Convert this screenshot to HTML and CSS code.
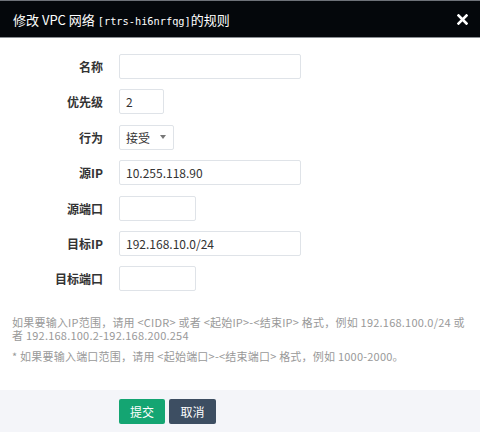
FILE: index.html
```html
<!DOCTYPE html>
<html lang="zh">
<head>
<meta charset="utf-8">
<link rel="stylesheet" href="styles.css">
</head>
<body>
<div class="dialog">
  <div class="header">
    <div class="title">修改 VPC 网络 <span class="mono">[rtrs-hi6nrfqg]</span>的规则</div>
    <div class="close">
      <svg width="11" height="11" viewBox="0 0 11 11"><path d="M1.5 1.5 L9.5 9.5 M9.5 1.5 L1.5 9.5" stroke="#fff" stroke-width="2.6" stroke-linecap="square"/></svg>
    </div>
  </div>
  <div class="body">
    <div class="form">
      <label class="lbl">名称</label><div class="field"><div class="input w-l"></div></div>
      <label class="lbl">优先级</label><div class="field"><div class="input w-s">2</div></div>
      <label class="lbl">行为</label><div class="field"><div class="input select">接受<span class="caret"></span></div></div>
      <label class="lbl">源IP</label><div class="field"><div class="input w-l">10.255.118.90</div></div>
      <label class="lbl">源端口</label><div class="field"><div class="input w-m"></div></div>
      <label class="lbl">目标IP</label><div class="field"><div class="input w-l">192.168.10.0/24</div></div>
      <label class="lbl">目标端口</label><div class="field"><div class="input w-m"></div></div>
    </div>
    <div class="help">
      <p>如果要输入IP范围，请用 &lt;CIDR&gt; 或者 &lt;起始IP&gt;-&lt;结束IP&gt; 格式，例如 192.168.100.0/24 或者 192.168.100.2-192.168.200.254</p>
      <p class="p2">* 如果要输入端口范围，请用 &lt;起始端口&gt;-&lt;结束端口&gt; 格式，例如 1000-2000。</p>
    </div>
  </div>
  <div class="footer">
    <button class="btn btn-ok">提交</button>
    <button class="btn btn-cancel">取消</button>
  </div>
</div>
</body>
</html>
```
FILE: styles.css
```css
* { box-sizing: border-box; }
html, body { margin: 0; padding: 0; }
body {
  width: 480px;
  height: 432px;
  background: #fff;
  font-family: "Noto Sans CJK SC", "Noto Sans", sans-serif;
  color: #333;
  overflow: hidden;
}
.dialog { display: flex; flex-direction: column; height: 432px; }
.header {
  height: 38px;
  background: #04070b;
  border-top: 1px solid #6d7178;
  border-bottom: 1px solid #8a8e93;
  display: flex;
  align-items: center;
  justify-content: space-between;
  padding: 0 12px 0 13px;
}
.title {
  color: #fff;
  font-size: 13px;
  font-weight: 400;
}
.mono {
  font-family: "DejaVu Sans Mono", "Liberation Mono", monospace;
  font-size: 10.3px;
}
.close { display: flex; align-items: center; margin-top: 1px; }
.body { flex: 1; padding: 16px 12px 0 12px; }
.form {
  display: grid;
  grid-template-columns: 91px 1fr;
  column-gap: 16px;
  row-gap: 10.4px;
  align-items: center;
}
.lbl {
  text-align: right;
  font-size: 12px;
  font-weight: 700;
  color: #333;
}
.field { display: flex; }
.input {
  height: 25px;
  border: 1px solid #dfe3e8;
  border-radius: 2px;
  font-size: 12px;
  color: #333;
  padding: 0 6px;
  display: flex;
  align-items: center;
  background: #fff;
}
.w-l { width: 182px; }
.w-s { width: 45px; }
.w-m { width: 77px; }
.select { width: 55px; justify-content: space-between; padding-right: 7px; }
.caret {
  width: 0; height: 0;
  border-left: 3.5px solid transparent;
  border-right: 3.5px solid transparent;
  border-top: 4px solid #777;
}
.help {
  margin-top: 25px;
  font-size: 11px;
  line-height: 13px;
  color: #999;
  letter-spacing: 0.22px;
}
.help p { margin: 0; }
.help .p2 { margin-top: 8px; }
.footer {
  height: 42px;
  background: #f4f5f9;
  padding: 9px 0 0 119px;
  display: flex;
  gap: 4px;
  align-items: flex-start;
}
.btn {
  height: 25px;
  border: none;
  border-radius: 2px;
  font-family: "Noto Sans CJK SC", sans-serif;
  font-size: 12px;
  color: #fff;
  padding: 0;
}
.btn-ok { width: 46px; background: #14a572; }
.btn-cancel { width: 47px; background: #3d4e62; }
```
